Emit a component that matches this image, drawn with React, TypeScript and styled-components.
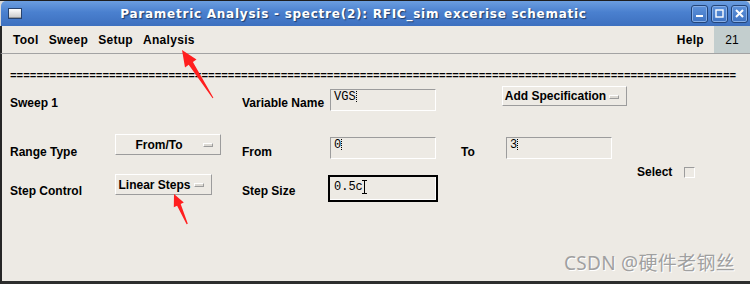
import React from "react";
import styled, { createGlobalStyle } from "styled-components";

const Global = createGlobalStyle`
  html, body { margin: 0; padding: 0; }
  body { width: 750px; height: 284px; overflow: hidden; background: #d9d9d9; }
  #root { width: 750px; height: 284px; }
`;

const Screen = styled.div`
  position: relative;
  width: 750px;
  height: 284px;
  border-top: 1px solid #1e1e1e;
  box-sizing: border-box;
  display: flex;
  flex-direction: column;
  font-family: "Liberation Sans", Arial, sans-serif;
  overflow: hidden;
`;

const TitleBar = styled.div`
  height: 25px;
  flex: none;
  display: flex;
  align-items: center;
  padding: 0 2px 0 7px;
  background: linear-gradient(#6b9ee0, #4a80cf 45%, #3d70bf);
  border-radius: 5px 5px 0 0;
  margin-left: 1px;
`;

const WinIcon = styled.div`
  width: 12px;
  height: 9px;
  border: 1px solid #28436e;
  background: linear-gradient(#ffffff, #c8c8c8);
  box-shadow: inset 0 -1px 0 #9a9a9a;
`;

const Title = styled.div`
  flex: 1;
  text-align: center;
  color: #ffffff;
  font-family: "DejaVu Sans", sans-serif;
  font-weight: bold;
  font-size: 12px;
  letter-spacing: 0.75px;
  text-shadow: 1px 1px 1px #1f3c68;
  padding-right: 6px;
`;

const WinButtons = styled.div`
  display: flex;
  gap: 3px;
`;

const WinButton = styled.div`
  width: 15px;
  height: 16px;
  border: 1px solid #23457a;
  border-radius: 3px;
  box-shadow: inset 0 0 0 1px #86aee6;
  background: linear-gradient(#5d92db, #3f73c2);
  display: flex;
  align-items: center;
  justify-content: center;
`;

const MenuBar = styled.div`
  height: 27px;
  flex: none;
  display: flex;
  align-items: stretch;
  background: #edeae4;
  border-left: 2px solid #262626;
  border-bottom: 1px solid #a3a3a3;
  padding-left: 6px;
`;

const MenuItem = styled.div`
  display: flex;
  align-items: center;
  padding: 0 5px;
  font-weight: bold;
  font-size: 12px;
  letter-spacing: 0.3px;
  color: #000;
`;

const Spacer = styled.div`
  flex: 1;
`;

const PageBadge = styled.div`
  width: 36px;
  margin-left: 5px;
  background: #c3cece;
  display: flex;
  align-items: center;
  justify-content: center;
  font-size: 12px;
  color: #000;
`;

const Body = styled.div`
  flex: 1;
  background: #edeae4;
  border-left: 2px solid #262626;
  border-bottom: 3px solid #2e2e2e;
  padding-left: 8px;
  display: flex;
  flex-direction: column;
`;

const Separator = styled.div`
  margin-top: 16px;
  width: 727px;
  height: 12px;
  line-height: 12px;
  white-space: nowrap;
  font-family: "Liberation Mono", monospace;
  font-weight: bold;
  font-size: 11px;
  color: #000;
`;

const Row = styled.div<{ $gap: number; $h: number }>`
  margin-top: ${(p) => p.$gap}px;
  height: ${(p) => p.$h}px;
  display: grid;
  grid-template-columns: 105px 127px 88px 131px 41px 1fr;
  align-items: start;
`;

const Label = styled.div<{ $top: number; $col: number }>`
  grid-column: ${(p) => p.$col};
  grid-row: 1;
  margin-top: ${(p) => p.$top}px;
  font-weight: bold;
  font-size: 12px;
  line-height: 14px;
  color: #000;
  white-space: nowrap;
`;

const Field = styled.div<{ $top: number; $col: number; $w: number; $shift?: number }>`
  grid-column: ${(p) => p.$col};
  grid-row: 1;
  margin-top: ${(p) => p.$top}px;
  margin-left: ${(p) => p.$shift ?? 0}px;
  width: ${(p) => p.$w}px;
  height: 22px;
  box-sizing: border-box;
  border-top: 1px solid #9c9c9c;
  border-left: 1px solid #9c9c9c;
  border-bottom: 1px solid #ffffff;
  border-right: 1px solid #ffffff;
  background: #edeae4;
  padding: 1px 0 0 3px;
  font-family: "Liberation Mono", monospace;
  font-size: 12px;
  line-height: 12px;
  color: #000;
  display: flex;
  align-items: flex-start;
`;

const FocusField = styled(Field)`
  height: 27px;
  border: 2px solid #000;
  box-shadow: inset -1px -1px 0 #ffffff;
  padding: 4px 0 0 4px;
`;

const DotCursor = styled.span`
  display: inline-block;
  width: 1px;
  height: 11px;
  border-left: 1px dotted #000;
`;

const IBeam = styled.span`
  display: inline-block;
  position: relative;
  width: 5px;
  height: 14px;
  margin-left: -1px;
  margin-top: -1px;
  &::before {
    content: "";
    position: absolute;
    left: 2px;
    top: 1px;
    width: 1px;
    height: 12px;
    background: #000;
  }
  &::after {
    content: "";
    position: absolute;
    left: 0;
    top: 0;
    width: 5px;
    height: 14px;
    border-top: 1px solid #000;
    border-bottom: 1px solid #000;
    box-sizing: border-box;
  }
`;

const OptionButton = styled.div<{ $top: number; $col: number; $w: number; $h: number }>`
  grid-column: ${(p) => p.$col};
  grid-row: 1;
  margin-top: ${(p) => p.$top}px;
  width: ${(p) => p.$w}px;
  height: ${(p) => p.$h}px;
  box-sizing: border-box;
  border-top: 1px solid #ffffff;
  border-left: 1px solid #ffffff;
  border-bottom: 1px solid #9c9c9c;
  border-right: 1px solid #9c9c9c;
  display: flex;
  align-items: center;
  padding: 0 7px 0 1px;
  gap: 2px;
  font-weight: bold;
  font-size: 12px;
  color: #000;
`;

const OptionText = styled.span`
  flex: 1;
  text-align: center;
  white-space: nowrap;
`;

const Indicator = styled.span`
  width: 10px;
  height: 4px;
  box-sizing: border-box;
  border-top: 1px solid #ffffff;
  border-left: 1px solid #ffffff;
  border-bottom: 1px solid #9c9c9c;
  border-right: 1px solid #9c9c9c;
  background: #dcd9d3;
  margin-top: 1px;
`;

const SelectGroup = styled.div`
  grid-column: 6;
  grid-row: 1;
  margin-left: 135px;
  display: flex;
  align-items: center;
  gap: 12px;
  font-weight: bold;
  font-size: 12px;
  line-height: 12px;
  color: #000;
`;

const Checkbox = styled.span`
  width: 11px;
  height: 11px;
  box-sizing: border-box;
  border-top: 1px solid #9c9c9c;
  border-left: 1px solid #9c9c9c;
  border-bottom: 1px solid #ffffff;
  border-right: 1px solid #ffffff;
`;

const Watermark = styled.div`
  position: absolute;
  right: 15px;
  bottom: 8px;
  font-family: "Noto Sans", "Noto Sans CJK SC", sans-serif;
  font-size: 19px;
  color: #a0a0a0;
  text-shadow: 1px 1px 0 #ffffff;
  letter-spacing: 0.3px;
`;

const Overlay = styled.svg`
  position: absolute;
  left: 0;
  top: 0;
  pointer-events: none;
`;

export default function App() {
  return (
    <>
      <Global />
      <Screen>
        <TitleBar>
          <WinIcon />
          <Title>Parametric Analysis - spectre(2): RFIC_sim excerise schematic</Title>
          <WinButtons>
            <WinButton>
              <svg width="9" height="9" viewBox="0 0 9 9">
                <rect x="1" y="6" width="7" height="2" fill="#fff" />
              </svg>
            </WinButton>
            <WinButton>
              <svg width="9" height="9" viewBox="0 0 9 9">
                <rect x="1" y="1" width="7" height="7" fill="none" stroke="#fff" strokeWidth="1.4" />
              </svg>
            </WinButton>
            <WinButton>
              <svg width="9" height="9" viewBox="0 0 9 9">
                <path d="M1 1 L8 8 M8 1 L1 8" stroke="#fff" strokeWidth="2" />
              </svg>
            </WinButton>
          </WinButtons>
        </TitleBar>
        <MenuBar>
          <MenuItem>Tool</MenuItem>
          <MenuItem>Sweep</MenuItem>
          <MenuItem>Setup</MenuItem>
          <MenuItem>Analysis</MenuItem>
          <Spacer />
          <MenuItem>Help</MenuItem>
          <PageBadge>21</PageBadge>
        </MenuBar>
        <Body>
          <Separator>{"=".repeat(110)}</Separator>
          <Row $gap={4} $h={26}>
            <Label $col={1} $top={10}>Sweep 1</Label>
            <Label $col={3} $top={10}>Variable Name</Label>
            <Field $col={4} $top={3} $w={106}>
              VGS<DotCursor />
            </Field>
            <OptionButton $col={6} $top={0} $w={125} $h={20}>
              <OptionText>Add Specification</OptionText>
              <Indicator />
            </OptionButton>
          </Row>
          <Row $gap={22} $h={26}>
            <Label $col={1} $top={11}>Range Type</Label>
            <OptionButton $col={2} $top={0} $w={106} $h={21}>
              <OptionText>From/To</OptionText>
              <Indicator />
            </OptionButton>
            <Label $col={3} $top={11}>From</Label>
            <Field $col={4} $top={3} $w={106}>
              0<DotCursor />
            </Field>
            <Label $col={5} $top={11}>To</Label>
            <Field $col={6} $top={3} $w={106} $shift={4}>
              3<DotCursor />
            </Field>
          </Row>
          <Row $gap={6} $h={36}>
            <Label $col={1} $top={18}>Step Control</Label>
            <OptionButton $col={2} $top={8} $w={97} $h={21}>
              <OptionText>Linear Steps</OptionText>
              <Indicator />
            </OptionButton>
            <Label $col={3} $top={18}>Step Size</Label>
            <FocusField $col={4} $top={9} $w={110} $shift={-2}>
              0.5c<IBeam />
            </FocusField>
            <SelectGroup>
              Select
              <Checkbox />
            </SelectGroup>
          </Row>
        </Body>
        <Watermark>CSDN @硬件老钢丝</Watermark>
        <Overlay width="750" height="284" viewBox="0 0 750 284">
          <polygon
            points="182,49 196.5,58.5 192.9,61 213.4,96.7 212.6,97.3 188.7,63.8 185,66.5"
            fill="#ff1f1f"
          />
          <polygon
            points="174,193 183.8,201.5 180.7,203.1 187.8,222.8 186.6,223.2 177.1,204.7 173.8,206.3"
            fill="#ff1f1f"
          />
        </Overlay>
      </Screen>
    </>
  );
}
